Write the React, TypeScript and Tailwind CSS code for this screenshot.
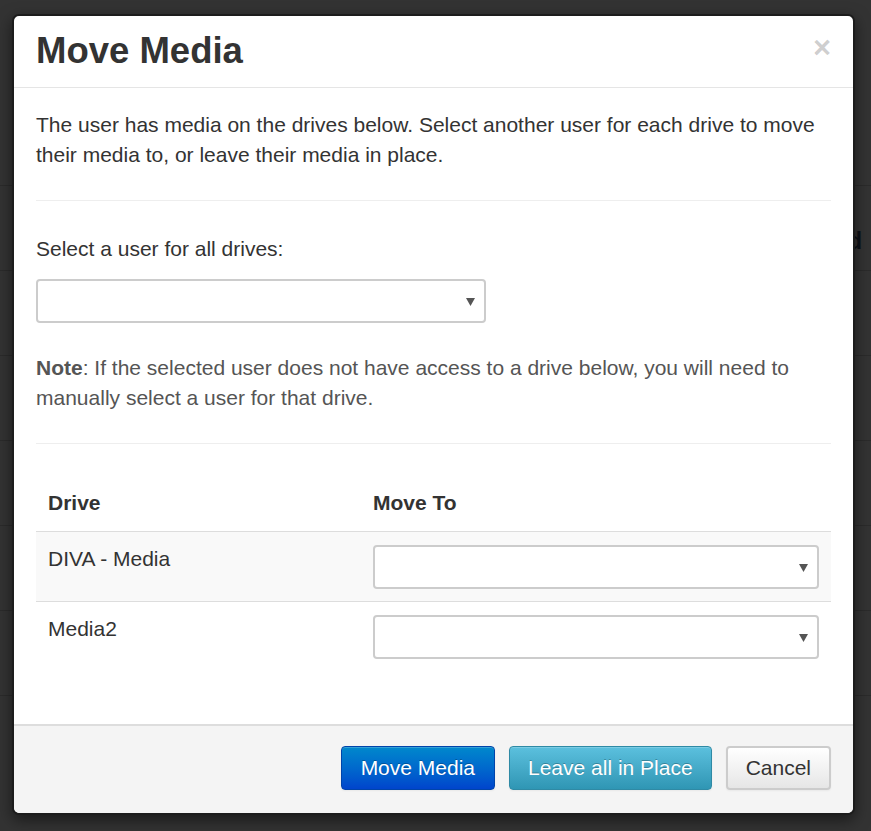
import React from "react";

const font = { fontFamily: '"Liberation Sans", Arial, sans-serif' };

function SelectBox({ className = "" }: { className?: string }) {
  return (
    <div
      className={`relative h-[44px] rounded-[4px] border-2 border-[#cccccc] bg-white ${className}`}
    >
      <svg
        className="absolute right-[9px] top-[16px]"
        width="9"
        height="9"
        viewBox="0 0 9 9"
      >
        <polygon points="0,1 9,1 4.5,9" fill="#555555" />
      </svg>
    </div>
  );
}

export default function App() {
  return (
    <div
      className="relative h-[831px] w-full overflow-hidden bg-[#333333]"
      style={font}
    >
      {/* Underlying page, dimmed by the backdrop */}
      <div className="flex flex-col">
        <div className="h-[186px] border-b border-[#2b2b2b]" />
        <div className="flex h-[85px] items-start justify-end border-b border-[#2b2b2b] pr-[9px] pt-[40px] text-[23px] font-bold leading-[30px] text-[#0c1118]">
          Assigned
        </div>
        <div className="h-[85px] border-b border-[#2b2b2b]" />
        <div className="h-[85px] border-b border-[#2b2b2b]" />
        <div className="h-[85px] border-b border-[#2b2b2b]" />
        <div className="h-[85px] border-b border-[#2b2b2b]" />
        <div className="h-[85px] border-b border-[#2b2b2b]" />
      </div>

      {/* Modal */}
      <div className="absolute left-[12px] top-[14px] w-[843px] rounded-[7px] border-2 border-[#1c1c1c] bg-white shadow-[0_5px_15px_rgba(0,0,0,0.5)]">
        {/* Header */}
        <div className="relative border-b border-[#e5e5e5] px-[22px] pb-[16px] pt-[15px]">
          <h3 className="text-[36.5px] font-bold leading-[40px] text-[#333333]">
            Move Media
          </h3>
          <button className="absolute right-[22px] top-[16px] text-[31px] font-bold leading-none text-black/20">
            ×
          </button>
        </div>

        {/* Body */}
        <div className="px-[22px] pb-[53px] pt-[22px] text-[21px] leading-[30px] text-[#333333]">
          <p>
            The user has media on the drives below. Select another user for
            each drive to move their media to, or leave their media in place.
          </p>
          <div className="mt-[30px] border-t border-[#eeeeee]" />
          <div className="mt-[33px]">Select a user for all drives:</div>
          <SelectBox className="mt-[15px] w-[450px]" />
          <p className="mt-[30px] text-[#555555]">
            <span className="font-bold">Note</span>: If the selected user does
            not have access to a drive below, you will need to manually select
            a user for that drive.
          </p>
          <div className="mt-[30px] border-t border-[#eeeeee]" />

          <div className="mt-[31px]">
            <div className="flex border-b border-[#dddddd] font-bold">
              <div className="w-[325px] px-[12px] pb-[13px] pt-[13px]">Drive</div>
              <div className="flex-1 px-[12px] pb-[13px] pt-[13px]">Move To</div>
            </div>
            <div className="flex bg-[#f9f9f9]">
              <div className="w-[325px] px-[12px] pt-[12px]">DIVA - Media</div>
              <div className="flex-1 px-[12px] pb-[12px] pt-[13px]">
                <SelectBox />
              </div>
            </div>
            <div className="flex border-t border-[#dddddd]">
              <div className="w-[325px] px-[12px] pt-[12px]">Media2</div>
              <div className="flex-1 px-[12px] pb-[12px] pt-[13px]">
                <SelectBox />
              </div>
            </div>
          </div>
        </div>

        {/* Footer */}
        <div className="flex justify-end gap-[14px] rounded-b-[6px] border-t-2 border-[#dddddd] bg-[#f4f4f4] px-[22px] pb-[23px] pt-[20px] text-[21px] leading-[30px]">
          <button className="rounded-[4px] border border-[#0044aa] bg-gradient-to-b from-[#0088cc] to-[#0044cc] px-[19px] py-[6px] text-white shadow-[inset_0_1px_0_rgba(255,255,255,0.2),0_1px_2px_rgba(0,0,0,0.05)] [text-shadow:0_-1px_0_rgba(0,0,0,0.25)]">
            Move Media
          </button>
          <button className="rounded-[4px] border border-[#2f8aa5] bg-gradient-to-b from-[#5bc0de] to-[#2f96b4] px-[18px] py-[6px] text-white shadow-[inset_0_1px_0_rgba(255,255,255,0.2),0_1px_2px_rgba(0,0,0,0.05)] [text-shadow:0_-1px_0_rgba(0,0,0,0.25)]">
            Leave all in Place
          </button>
          <button className="rounded-[4px] border-2 border-[#cccccc] bg-gradient-to-b from-[#ffffff] to-[#e6e6e6] px-[18px] py-[5px] text-[#333333] shadow-[inset_0_1px_0_rgba(255,255,255,0.2),0_1px_2px_rgba(0,0,0,0.05)]">
            Cancel
          </button>
        </div>
      </div>
    </div>
  );
}
